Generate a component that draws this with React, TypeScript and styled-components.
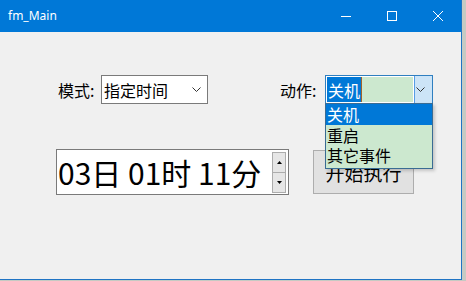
import styled, { createGlobalStyle } from 'styled-components'

const GlobalStyle = createGlobalStyle`
  html, body {
    margin: 0;
    padding: 0;
  }
  body {
    width: 466px;
    height: 281px;
    overflow: hidden;
    background: #c6cac3;
    font-family: "Noto Sans CJK SC", "Noto Sans", sans-serif;
  }
`

const Desktop = styled.div`
  display: flex;
  width: 466px;
  height: 281px;
  background: #c6cac3;
`

const Window = styled.div`
  display: flex;
  flex-direction: column;
  width: 462px;
  height: 280px;
  box-sizing: border-box;
  background: #f0f0f0;
  border-right: 1px solid #1f74c4;
  border-bottom: 1px solid #1f74c4;
`

const TitleBar = styled.div`
  display: flex;
  align-items: center;
  height: 32px;
  flex-shrink: 0;
  background: #0078d7;
  color: #fff;
`

const Title = styled.div`
  flex: 1;
  padding-left: 8px;
  font-family: "Noto Sans", "Open Sans", sans-serif;
  font-size: 12px;
  line-height: 1;
`

const CaptionButton = styled.div`
  display: flex;
  align-items: center;
  justify-content: center;
  width: 46px;
  height: 32px;
`

const Body = styled.div`
  display: flex;
  flex-direction: column;
  flex: 1;
  padding-top: 43px;
`

const Row = styled.div<{ $left: number; $top?: number }>`
  display: flex;
  align-items: center;
  padding-left: ${({ $left }) => $left}px;
  margin-top: ${({ $top }) => $top ?? 0}px;
`

const Label = styled.div<{ $width: number; $gap?: number }>`
  width: ${({ $width }) => $width}px;
  margin-left: ${({ $gap }) => $gap ?? 0}px;
  font-size: 16px;
  line-height: 1;
  color: #000;
  white-space: nowrap;
`

const Combo = styled.div`
  display: flex;
  align-items: center;
  box-sizing: border-box;
  width: 107px;
  height: 29px;
  border: 1px solid #7a7a7a;
  background: #fff;
  font-size: 16px;
  line-height: 1;
`

const ComboText = styled.div`
  flex: 1;
  padding-left: 2px;
`

const Chevron = styled.svg`
  margin-right: 6px;
`

const ActionCombo = styled.div`
  position: relative;
  display: flex;
  box-sizing: border-box;
  width: 108px;
  height: 29px;
  border: 1px solid #2f7fc0;
  background: #fff;
  font-size: 16px;
  line-height: 1;
`

const ComboField = styled.div`
  display: flex;
  align-items: stretch;
  flex: 1;
  margin: 1px;
  background: #cce8cf;
`

const Selection = styled.span`
  display: flex;
  align-items: center;
  padding: 0 1px;
  background: #0078d7;
  color: #fff;
`

const Caret = styled.span`
  width: 1px;
  background: #a0622d;
`

const DropButton = styled.div`
  display: flex;
  align-items: center;
  justify-content: center;
  width: 17px;
  border-left: 1px solid #569de5;
  background: #cce4f7;
`

const DropList = styled.div`
  position: absolute;
  top: 100%;
  left: -1px;
  z-index: 5;
  box-sizing: border-box;
  width: 108px;
  padding-bottom: 2px;
  border: 1px solid #3a6c93;
  background: #cce8cf;
  box-shadow: 2px 2px 3px rgba(0, 0, 0, 0.18);
`

const DropItem = styled.div<{ $active?: boolean }>`
  display: flex;
  align-items: center;
  height: 20.5px;
  padding-left: 1px;
  font-size: 16px;
  line-height: 1;
  background: ${({ $active }) => ($active ? '#0078d7' : 'transparent')};
  color: ${({ $active }) => ($active ? '#fff' : '#000')};
`

const Spinner = styled.div`
  display: flex;
  align-items: center;
  box-sizing: border-box;
  width: 233px;
  height: 46px;
  border: 1px solid #7a7a7a;
  background: #fff;
`

const SpinText = styled.div`
  flex: 1;
  padding-left: 1px;
  font-size: 30px;
  line-height: 1;
  color: #000;
  white-space: nowrap;
`

const SpinButtons = styled.div`
  display: flex;
  flex-direction: column;
  align-self: stretch;
  width: 14px;
  margin: 2px 2px 1px 0;
`

const SpinButton = styled.div`
  display: flex;
  flex: 1;
  align-items: center;
  justify-content: center;
  border: 1px solid #acacac;
  background: #e6e6e6;
  & + & {
    border-top: none;
  }
`

const ActionButton = styled.div`
  display: flex;
  align-items: center;
  justify-content: center;
  box-sizing: border-box;
  width: 101px;
  height: 44px;
  margin-left: 24px;
  border: 1px solid #adadad;
  background: #e1e1e1;
  font-size: 19px;
  line-height: 1;
  color: #000;
`

const ChevronIcon = () => (
  <Chevron width="9" height="5" viewBox="0 0 9 5">
    <path d="M0.5 0.5 L4.5 4.5 L8.5 0.5" fill="none" stroke="#333" strokeWidth="1" />
  </Chevron>
)

const Triangle = ({ up }: { up?: boolean }) => (
  <svg width="5" height="3" viewBox="0 0 5 3">
    <path d={up ? 'M0 3 L2.5 0 L5 3 Z' : 'M0 0 L2.5 3 L5 0 Z'} fill="#000" />
  </svg>
)

export default function App() {
  return (
    <Desktop>
      <GlobalStyle />
      <Window>
        <TitleBar>
          <Title>fm_Main</Title>
          <CaptionButton>
            <svg width="10" height="10" viewBox="0 0 10 10">
              <path d="M0 5.5 H10" stroke="#fff" strokeWidth="1" />
            </svg>
          </CaptionButton>
          <CaptionButton>
            <svg width="10" height="10" viewBox="0 0 10 10">
              <rect x="0.5" y="0.5" width="9" height="9" fill="none" stroke="#fff" strokeWidth="1" />
            </svg>
          </CaptionButton>
          <CaptionButton>
            <svg width="10" height="10" viewBox="0 0 10 10">
              <path d="M0 0 L10 10 M10 0 L0 10" stroke="#fff" strokeWidth="1" />
            </svg>
          </CaptionButton>
        </TitleBar>
        <Body>
          <Row $left={58}>
            <Label $width={43}>模式:</Label>
            <Combo>
              <ComboText>指定时间</ComboText>
              <ChevronIcon />
            </Combo>
            <Label $width={45} $gap={72}>
              动作:
            </Label>
            <ActionCombo>
              <ComboField>
                <Selection>关机</Selection>
                <Caret />
              </ComboField>
              <DropButton>
                <ChevronIcon />
              </DropButton>
              <DropList>
                <DropItem $active>关机</DropItem>
                <DropItem>重启</DropItem>
                <DropItem>其它事件</DropItem>
              </DropList>
            </ActionCombo>
          </Row>
          <Row $left={56} $top={45}>
            <Spinner>
              <SpinText>03日 01时 11分</SpinText>
              <SpinButtons>
                <SpinButton>
                  <Triangle up />
                </SpinButton>
                <SpinButton>
                  <Triangle />
                </SpinButton>
              </SpinButtons>
            </Spinner>
            <ActionButton>开始执行</ActionButton>
          </Row>
        </Body>
      </Window>
    </Desktop>
  )
}
